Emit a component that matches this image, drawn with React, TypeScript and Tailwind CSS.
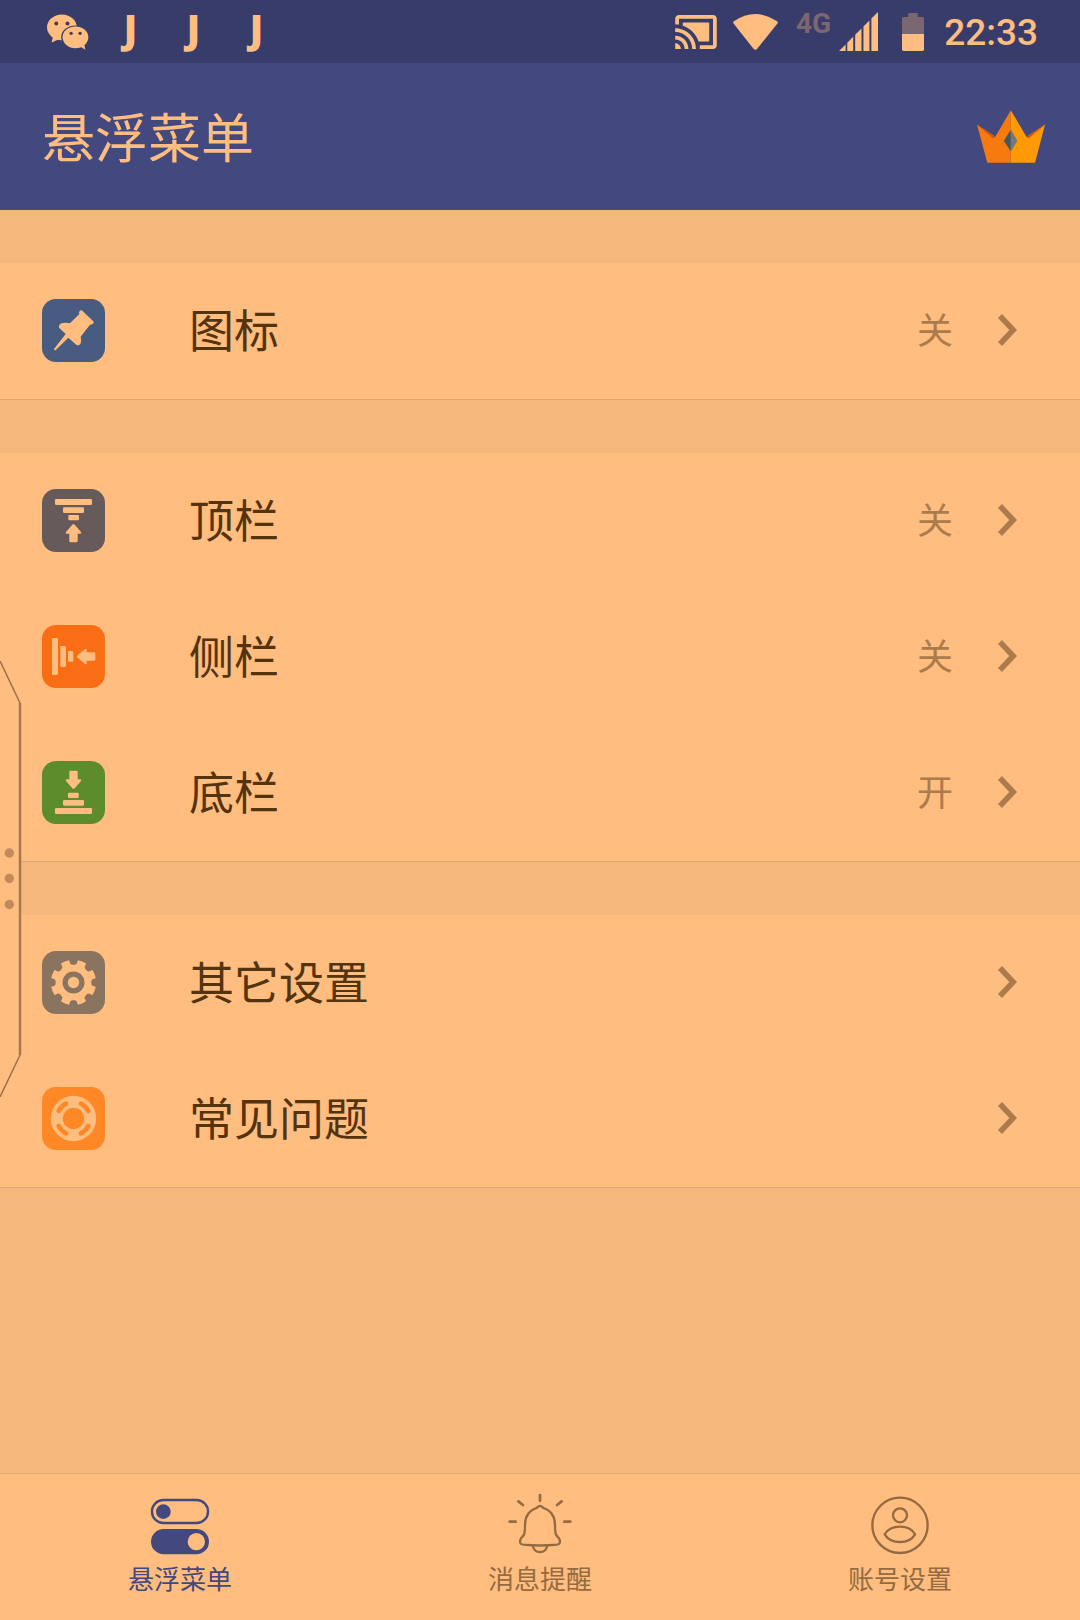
import type { ReactNode } from "react";

type Item = {
  key: string;
  label: string;
  value?: string;
  tile: string;
  icon: ReactNode;
};

// bars shrinking towards an arrow, rotated for each screen edge
const EdgeGlyph = ({ angle }: { angle: number }) => (
  <g transform={`rotate(${angle} 94.5 94.5)`}>
    <rect x="39" y="30" width="111" height="18" rx="4" />
    <rect x="63" y="55" width="63" height="17" rx="4" />
    <rect x="79" y="78" width="32" height="16" rx="3" />
    <path d="M91 107Q94.500 103 98 107L117 129Q120 134 115 134H107V156Q107 160 103 160H86Q82 160 82 156V134H74Q69 134 72 129Z" />
  </g>
);

const PinGlyph = () => (
  <path d="M36 150L71 105L51 86Q49 78 58 73Q70 69 84 73L112 45Q109 37 117 34Q121 34 124 38L154 67Q157 72 152 75Q148 77 144 77L116 113Q120 131 112 138Q105 141 100 135L79 116L42 152Q36 156 36 150Z" />
);

const GearGlyph = () => (
  <>
    <circle cx="94.5" cy="94.5" r="68" />
    <g className="fill-[#8b745f]">
      {[0, 45, 90, 135, 180, 225, 270, 315].map((a) => (
        <path
          key={a}
          d="M79 20H110L106 33Q105 41 98 41H91Q84 41 83 33Z"
          transform={`rotate(${a} 94.5 94.5)`}
        />
      ))}
      <circle cx="94.5" cy="94.5" r="33" />
    </g>
    <circle cx="94.5" cy="94.5" r="17" />
  </>
);

const BuoyGlyph = () => (
  <>
    <circle cx="94.5" cy="94.5" r="68" />
    <circle cx="94.5" cy="94.5" r="32" className="fill-[#ff8826]" />
    {[0, 90, 180, 270].map((a) => (
      <path
        key={a}
        d="M139 72A50 50 0 0 0 117 50"
        transform={`rotate(${a} 94.5 94.5)`}
        className="fill-none stroke-[#ff8826]"
        strokeWidth="14"
        strokeLinecap="round"
      />
    ))}
  </>
);

const groups: Item[][] = [
  [{ key: "icon", label: "图标", value: "关", tile: "bg-[#475c80]", icon: <PinGlyph /> }],
  [
    { key: "top", label: "顶栏", value: "关", tile: "bg-[#675a5b]", icon: <EdgeGlyph angle={0} /> },
    { key: "side", label: "侧栏", value: "关", tile: "bg-[#f96d14]", icon: <EdgeGlyph angle={-90} /> },
    { key: "bottom", label: "底栏", value: "开", tile: "bg-[#5d8d2a]", icon: <EdgeGlyph angle={180} /> },
  ],
  [
    { key: "other", label: "其它设置", tile: "bg-[#8b745f]", icon: <GearGlyph /> },
    { key: "faq", label: "常见问题", tile: "bg-[#ff8826]", icon: <BuoyGlyph /> },
  ],
];

const tabs = [
  {
    key: "menu",
    label: "悬浮菜单",
    active: true,
    icon: (
      <>
        <rect x="12" y="24" width="168" height="69" rx="34" strokeWidth="7" />
        <circle cx="46" cy="59" r="22" fill="currentColor" stroke="none" />
        <path
          d="M47 111H145A38 38 0 0 1 145 187H47A38 38 0 0 1 47 111ZM145 123A26 26 0 1 0 145 175A26 26 0 1 0 145 123Z"
          fill="currentColor"
          fillRule="evenodd"
          stroke="none"
        />
      </>
    ),
  },
  {
    key: "notice",
    label: "消息提醒",
    active: false,
    icon: (
      <>
        <path d="M96 9V26M31 28L45 39M161 28L147 39M5 89H23M169 89H187" strokeWidth="8" />
        <path
          d="M96 42Q102 42 106 48Q140 58 141 98Q141 126 146 131L153 139Q161 156 147 158Q96 163 45 158Q31 156 39 139L46 131Q51 126 51 98Q52 58 86 48Q90 42 96 42Z"
          strokeWidth="7"
        />
        <path d="M75 163Q78 180 96 180Q114 180 117 163" strokeWidth="7" />
      </>
    ),
  },
  {
    key: "account",
    label: "账号设置",
    active: false,
    icon: (
      <>
        <circle cx="96" cy="100" r="83" strokeWidth="7" />
        <circle cx="96" cy="70" r="21" strokeWidth="7" />
        <path d="M50 127Q64 104 96 104Q128 104 141 127Q128 150 96 150Q64 150 50 127Z" strokeWidth="7" />
      </>
    ),
  },
];

function StatusBar() {
  return (
    <div className="flex h-[63px] items-center justify-between bg-[#383c6b] pl-9 pr-[42px] text-[#ffbd80]">
      <div className="flex items-center">
        <span className="flex w-[63px] justify-center">
          <svg viewBox="142 40 127 108" className="h-9 w-[42px]" fill="currentColor">
            <path d="M160 108L156 126L178 116Z" />
            <ellipse cx="187" cy="80" rx="45" ry="39" />
            <ellipse cx="228" cy="110" rx="43" ry="36" className="fill-[#383c6b]" />
            <ellipse cx="228" cy="110" rx="39" ry="33" />
            <path d="M242 138L258 148L254 128Z" />
            <g className="fill-[#4d3a4c]">
              <circle cx="170" cy="68" r="6" />
              <circle cx="204" cy="68" r="6" />
              <circle cx="215" cy="98" r="5" />
              <circle cx="242" cy="98" r="5" />
            </g>
          </svg>
        </span>
        {["a", "b", "c"].map((k) => (
          <span
            key={k}
            className="w-[63px] pb-2 text-center font-['Open_Sans',sans-serif] text-[38px] leading-[54px] font-extrabold"
          >
            J
          </span>
        ))}
      </div>

      <div className="flex items-center">
        <svg viewBox="1 3 22 18" className="h-[34px] w-[42px]" fill="currentColor">
          <path d="M1 18v3h3c0-1.66-1.34-3-3-3zm0-4v2c2.76 0 5 2.24 5 5h2c0-3.87-3.13-7-7-7zm18-7H5v1.63c3.96 1.28 7.09 4.41 8.37 8.37H19V7zM1 10v2c4.970 0 9 4.030 9 9h2c0-6.080-4.930-11-11-11zm20-7H3c-1.100 0-2 .9-2 2v3h2V5h18v14h-7v2h7c1.100 0 2-.9 2-2V5c0-1.100-.9-2-2-2z" />
        </svg>
        <svg viewBox="245 39 135 109" className="ml-4 h-9 w-[45px]" fill="currentColor">
          <path d="M247 61Q312 17 378 61Q381 64 379 68L317 145Q312 150 307 145L246 68Q244 64 247 61Z" />
        </svg>
        <span className="ml-[18px] self-start font-[Roboto,sans-serif] text-[28px] leading-[42px] font-bold text-[#7b6772]">
          4G
        </span>
        <svg viewBox="566 32 118 118" className="ml-2 h-[39px] w-[39px]" fill="currentColor">
          <path d="M566 150L586 130V150ZM591 150V125L609 107V150ZM615 150V101L634 82V150ZM640 150V76L658 58V150ZM664 150V52L684 32V150Z" />
        </svg>
        <svg viewBox="756 36 66 114" className="ml-6 h-[38px] w-[22px]">
          <path d="M775 36H803V48H817Q822 48 822 53V99H756V53Q756 48 761 48H775Z" fill="#7b6772" />
          <path d="M756 99H822V145Q822 150 817 150H761Q756 150 756 145Z" fill="currentColor" />
        </svg>
        <time className="ml-5 pt-[3px] font-[Roboto,sans-serif] text-[37px] leading-[54px] font-medium">22:33</time>
      </div>
    </div>
  );
}

function Header() {
  return (
    <header className="flex h-[147px] items-center justify-between bg-[#43487f] pl-[42px] pr-[35px]">
      <h1 className="pb-1 text-[53px] leading-[64px] text-[#ffbd80]">悬浮菜单</h1>
      <button type="button" aria-label="会员">
        <svg viewBox="981 327 205 159" className="h-[53px] w-[68px]">
          <path d="M981 370L1034 404L1020 440ZM1186 370L1133 404L1146 440Z" fill="#cf5b12" />
          <path d="M981 370L1028 412L1036 407L1083 327V486H1012Z" fill="#f67a0e" />
          <path d="M1186 370L1138 412L1130 407L1083 327V486H1156Z" fill="#ff9a05" />
          <path d="M1083 386L1062 419L1083 452Z" fill="#3f5861" />
          <path d="M1083 386L1103 419L1083 452Z" fill="#71797c" />
        </svg>
      </button>
    </header>
  );
}

function Row({ item }: { item: Item }) {
  return (
    <button type="button" className="flex h-[136px] w-full items-center pb-[2px] pl-[42px] pr-[63px] text-left">
      <span className={`h-[63px] w-[63px] shrink-0 rounded-[14px] ${item.tile}`}>
        <svg viewBox="0 0 189 189" className="h-full w-full fill-[#ffbd80]">
          {item.icon}
        </svg>
      </span>
      <span className="ml-[84px] flex-1 pb-[2px] text-[45px] leading-[60px] text-[#54340f]">{item.label}</span>
      {item.value && <span className="pb-1 text-[36px] leading-[60px] text-[#ab7b4c]">{item.value}</span>}
      <svg viewBox="0 0 57 96" className="ml-[45px] h-8 w-[19px] fill-[#ab7b4c]">
        <path d="M12 0L57 48L12 96L0 84L34 48L0 12Z" />
      </svg>
    </button>
  );
}

// pull-out handle that floats over the left edge
function EdgeHandle() {
  return (
    <svg viewBox="0 0 22 436" className="absolute top-[661px] left-0 h-[436px] w-[22px]">
      <path d="M0 0L20 42V394L0 436Z" fill="#ffbd80" />
      <path d="M0 0L20 42M20 394L0 436" fill="none" stroke="#9b7148" strokeWidth="1.5" />
      <path d="M20 42V394" stroke="#a67a4e" strokeWidth="2.5" />
      <g fill="#c08a5a">
        <circle cx="9.3" cy="192" r="4.7" />
        <circle cx="9.3" cy="217.500" r="4.7" />
        <circle cx="9.3" cy="243.500" r="4.7" />
      </g>
    </svg>
  );
}

export default function App() {
  return (
    <div className="relative flex min-h-screen flex-col bg-[#f5b77c] font-['Noto_Sans_CJK_SC',sans-serif]">
      <StatusBar />
      <Header />

      <main className="flex-1">
        {groups.map((items, i) => (
          <section key={i} className="mt-[53px] border-b border-[#dfa672] bg-[#ffbd80]">
            {items.map((item) => (
              <Row key={item.key} item={item} />
            ))}
          </section>
        ))}
      </main>

      <nav className="grid grid-cols-3 border-t border-[#e3a975] bg-[#ffbd80] pt-[18px] pb-6">
        {tabs.map((tab) => (
          <a
            key={tab.key}
            href={`#${tab.key}`}
            className={`flex flex-col items-center gap-1 ${tab.active ? "text-[#43487f]" : "text-[#946b40]"}`}
          >
            <svg viewBox="0 0 192 192" className="h-16 w-16" fill="none" stroke="currentColor" strokeLinecap="round">
              {tab.icon}
            </svg>
            <span className="text-[26px] leading-9">{tab.label}</span>
          </a>
        ))}
      </nav>

      <EdgeHandle />
    </div>
  );
}
